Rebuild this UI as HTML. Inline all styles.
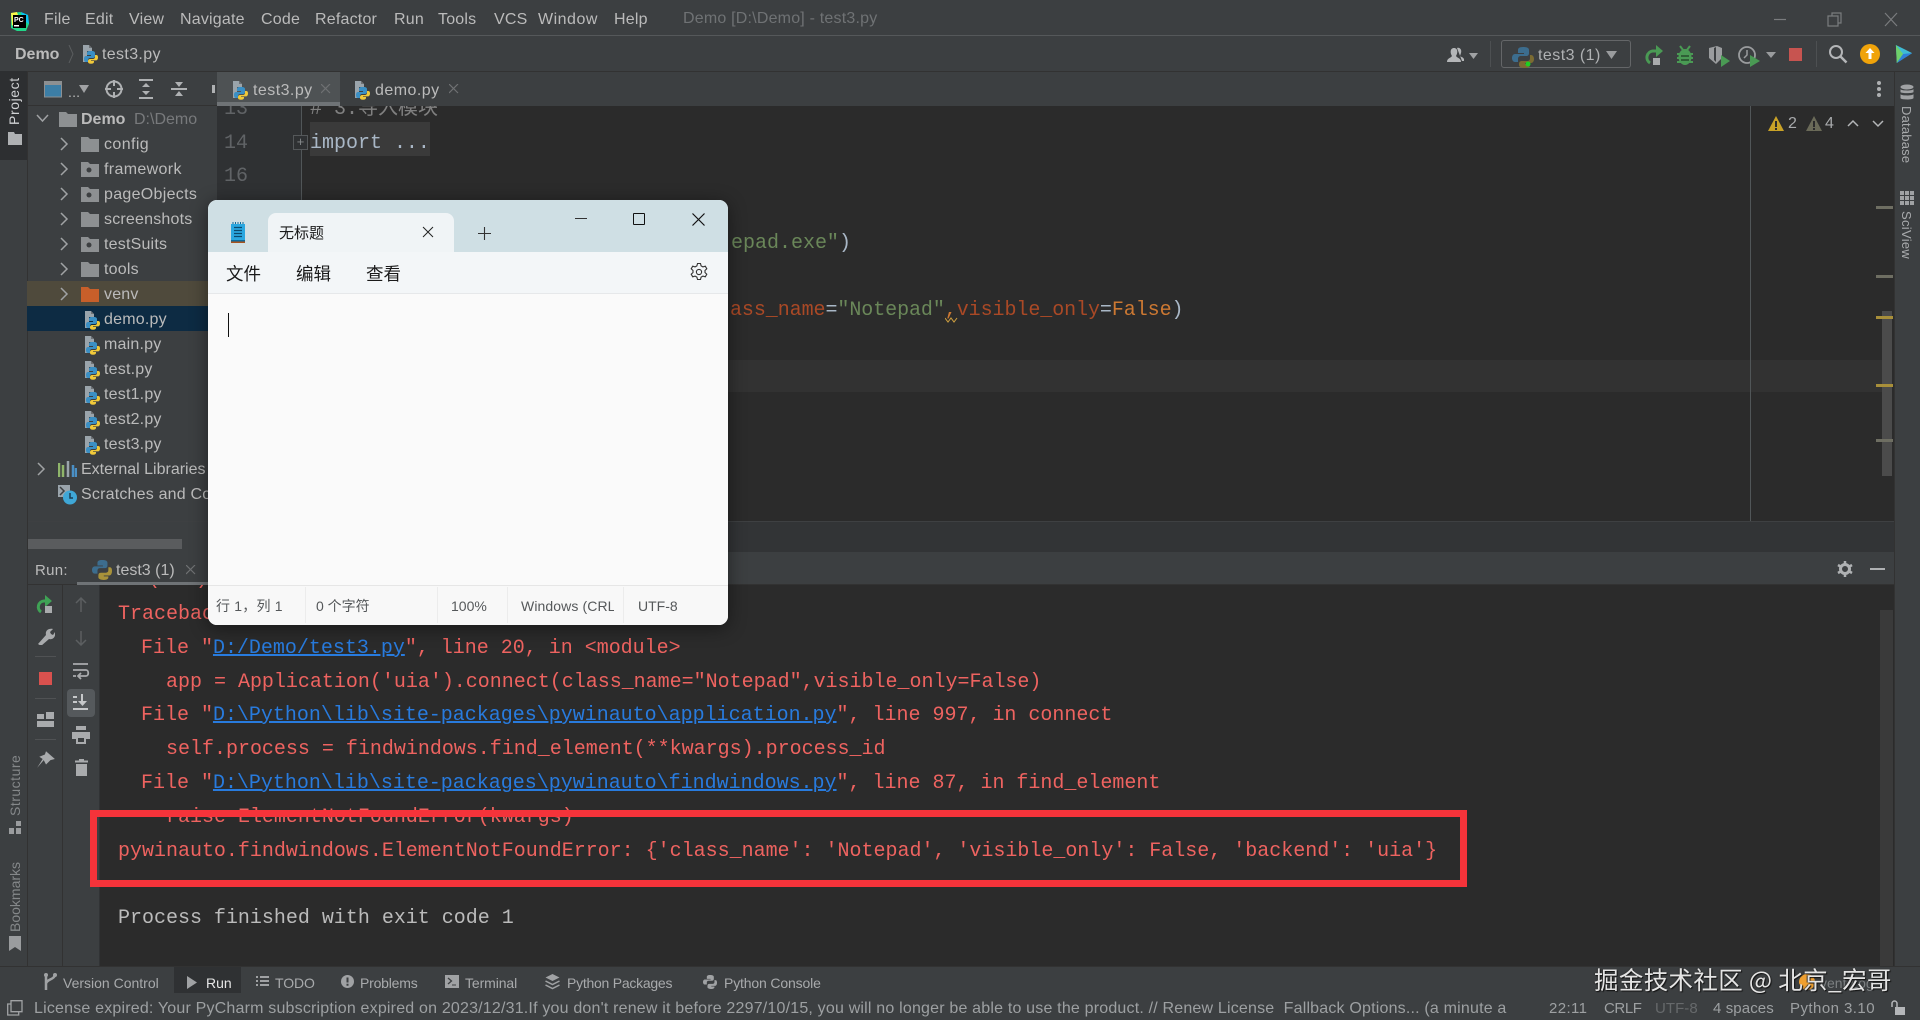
<!DOCTYPE html>
<html><head><meta charset="utf-8"><title>Demo - test3.py</title>
<style>
html,body{margin:0;padding:0;background:#2b2b2b;width:1920px;height:1020px;overflow:hidden}
#r{position:relative;width:1920px;height:1020px;overflow:hidden;background:#2b2b2b;font-family:"Liberation Sans","Noto Sans CJK SC",sans-serif;color:#bbb}
#r div,#r svg{position:absolute}
.t{white-space:pre;height:24px;line-height:24px;font-size:16px;letter-spacing:.2px;color:#bbb;margin-top:1px}
.m{font-family:"Liberation Mono","Noto Sans CJK SC",monospace;font-size:20px;letter-spacing:-.01px;color:#ee6360;height:30px;line-height:30px;white-space:pre;margin-top:2px}
.m u{color:#287bde;text-decoration:underline}
.b{font-size:14px;color:#a8aaac;height:20px;line-height:20px;white-space:pre}
.s{font-size:15px;color:#9da0a2;height:20px;line-height:20px;white-space:pre;letter-spacing:.05px;margin-top:1px}
.n{font-size:14px;color:#55585a;height:20px;line-height:20px;white-space:pre;font-family:"Liberation Sans","Noto Sans CJK SC",sans-serif}
.v{writing-mode:vertical-rl;white-space:pre;font-size:13px;color:#a8aaac;letter-spacing:.3px}
.vu{transform:rotate(180deg)}
</style></head><body>
<div id="r">
<svg width="0" height="0" style="left:0;top:0"><defs>
<symbol id="py" viewBox="0 0 18 20"><path d="M2 1h6l3 3v3H6v11H2z" fill="#9aa4ab"/><path d="M8 1v3h3z" fill="#6e7276"/><path d="M9 7c-2.500 0-3 1-3 2v2h4v1H5c-1.500 0-2 1.500-2 3s.5 3 2 3h2v-2c0-1 .7-2 2-2h3c1 0 2-.8 2-2V9c0-1-1-2-3-2z" fill="#3a8fc4"/><path d="M14 11v2c0 1.200-1 2-2 2H9c-1 0-2 .8-2 2v1c0 1 1 1.700 3 1.700s3-.7 3-1.700v-1H10v-.6h5c1.300 0 2-1.200 2-3s-.7-2.400-2-2.400z" fill="#f0c93a"/></symbol>
<symbol id="fd" viewBox="0 0 18 18"><path d="M0 2h7l2 2h9v13H0z" fill="#8d9092"/></symbol>
<symbol id="fp" viewBox="0 0 18 18"><path d="M0 2h7l2 2h9v13H0z" fill="#8d9092"/><circle cx="8" cy="10" r="2.500" fill="#3c3f41"/></symbol>
<symbol id="ch" viewBox="0 0 10 14"><path d="M2 1l6 6-6 6" fill="none" stroke="#a0a2a4" stroke-width="1.500"/></symbol>
</defs></svg>

<!-- title bar -->
<div style="left:0;top:0;width:1920px;height:35px;background:#3c3f41"></div>
<div style="left:0;top:35px;width:1920px;height:1px;background:#55585a"></div>
<svg style="left:9px;top:11px" width="21" height="21" viewBox="0 0 21 21"><path d="M2 2l9-1 8 3 1 9-3 7-9 0-6-3z" fill="#21d789"/><path d="M2 2l6-1 2 6-7 8z" fill="#fcf84a"/><path d="M12 1l7 3 1 9-6-4z" fill="#07c3f2"/><rect x="4" y="4" width="13" height="13" fill="#000"/><text x="5" y="11" font-size="7" font-family="Liberation Sans" font-weight="bold" fill="#fff">PC</text><rect x="5" y="14" width="5" height="1.500" fill="#fff"/></svg>
<div class="t" style="left:44px;top:7px">File</div>
<div class="t" style="left:85px;top:7px">Edit</div>
<div class="t" style="left:129px;top:7px">View</div>
<div class="t" style="left:180px;top:7px">Navigate</div>
<div class="t" style="left:261px;top:7px">Code</div>
<div class="t" style="left:315px;top:7px">Refactor</div>
<div class="t" style="left:394px;top:7px">Run</div>
<div class="t" style="left:438px;top:7px">Tools</div>
<div class="t" style="left:494px;top:7px">VCS</div>
<div class="t" style="left:538px;top:7px;letter-spacing:.5px">Window</div>
<div class="t" style="left:614px;top:7px">Help</div>
<div class="t" style="left:683px;top:6px;color:#6f7274;font-size:16px;letter-spacing:.2px">Demo [D:\Demo] - test3.py</div>
<svg style="left:1760px;top:10px" width="150" height="18" viewBox="0 0 150 18" fill="none" stroke="#7a7c7e" stroke-width="1.200"><path d="M14 9.500h12"/><path d="M72 6.500v-2.500h9v10h-3M72 7h-4v10h10v-10z" transform="translate(0,-1)"/><path d="M125 3l12 13M137 3l-12 13"/></svg>

<!-- nav bar -->
<div style="left:0;top:36px;width:1920px;height:35px;background:#3c3f41"></div>
<div style="left:0;top:71px;width:1920px;height:1px;background:#323232"></div>
<div class="t" style="left:15px;top:42px;font-weight:bold;font-size:16px;letter-spacing:0">Demo</div>
<svg style="left:68px;top:45px" width="6" height="18" viewBox="0 0 6 18"><path d="M1 0l4 9-4 9" stroke="#5a5d5f" fill="none"/></svg>
<svg style="left:81px;top:44px" width="18" height="20"><use href="#py"/></svg>
<div class="t" style="left:102px;top:42px;letter-spacing:.35px">test3.py</div>
<svg style="left:1445px;top:46px" width="36" height="18" viewBox="0 0 36 18"><path d="M2 16c0-4 4-4 5-6-2-3-2-8 2-8s4 5 2 8c1 2 5 2 5 6z" fill="#b4b6b8"/><path d="M12 2c3-1 5 2 4 5l-1 3c1 1 3 1 4 3v2h-2" fill="#b4b6b8"/><path d="M24 7h9l-4.500 6z" fill="#a0a2a4"/></svg>
<div style="left:1490px;top:41px;width:1px;height:26px;background:#4d5052"></div>
<div style="left:1501px;top:40px;width:128px;height:26px;border:1px solid #646668;border-radius:3px"></div>
<svg style="left:1512px;top:44px" width="22" height="24" viewBox="0 0 22 24"><path d="M11 3c-4 0-5 1.500-5 3v3h6v1H3c-2 0-3 2-3 4s1 4 3 4h3v-3c0-2 1-3 3-3h5c2 0 3-1 3-3V6c0-2-2-3-6-3z" fill="#3c6d8e"/><path d="M18 11v3c0 2-1 3-3 3H10c-2 0-3 1-3 3v1c0 2 3 3 6 3s5-1 5-3v-1h-5v-1h6c2 0 3-2 3-4s-1-4-3-4z" fill="#7b6b32"/><circle cx="16" cy="20" r="2.500" fill="#1ed021"/></svg>
<div class="t" style="left:1538px;top:43px;letter-spacing:.45px;color:#afb1b3">test3 (1)</div>
<svg style="left:1606px;top:50px" width="12" height="10"><path d="M0 1h11L5.500 9z" fill="#9a9c9e"/></svg>
<svg style="left:1643px;top:44px" width="22" height="24" viewBox="0 0 22 24"><path d="M16 7H10a6.500 6.500 0 0 0-3 12" fill="none" stroke="#4a9a54" stroke-width="3"/><path d="M13 1l7 6-7 6z" fill="#4a9a54"/><rect x="10" y="14" width="7" height="7" fill="#a9abad"/></svg>
<svg style="left:1675px;top:44px" width="20" height="24" viewBox="0 0 20 24"><ellipse cx="10" cy="13" rx="6.500" ry="8" fill="#4a9a54"/><path d="M2 10h16M2 14h16M2 18h16M5 2l3 4M15 2l-3 4" stroke="#4a9a54" stroke-width="2"/><path d="M6 12h8M6 16h8" stroke="#2f5f36" stroke-width="2"/></svg>
<svg style="left:1707px;top:44px" width="24" height="24" viewBox="0 0 24 24"><path d="M2 4l8-2 5 2v10l-6 6-7-6z" fill="#9a9c9e"/><path d="M9 3l-2 1v12l2 2z" fill="#3c3f41"/><path d="M14 11l9 6-9 6z" fill="#4a9a54"/></svg>
<svg style="left:1737px;top:44px" width="24" height="24" viewBox="0 0 24 24"><circle cx="10" cy="11" r="8" fill="none" stroke="#9a9c9e" stroke-width="1.800"/><path d="M10 6v5l-3 3" stroke="#9a9c9e" stroke-width="1.500" fill="none"/><path d="M13 11l10 6-10 6z" fill="#4a9a54"/></svg>
<svg style="left:1766px;top:52px" width="11" height="8"><path d="M0 0h10L5 6z" fill="#9a9c9e"/></svg>
<div style="left:1789px;top:48px;width:13px;height:13px;background:#c75450"></div>
<div style="left:1816px;top:41px;width:1px;height:26px;background:#4d5052"></div>
<svg style="left:1828px;top:44px" width="20" height="20" viewBox="0 0 20 20" fill="none" stroke="#b4b6b8" stroke-width="2"><circle cx="8" cy="8" r="6"/><path d="M12.500 12.500l6 6" stroke-width="2.500"/></svg>
<svg style="left:1860px;top:44px" width="20" height="20" viewBox="0 0 20 20"><circle cx="10" cy="10" r="10" fill="#f0a30a"/><path d="M10 4l4.500 5H11.500v6h-3V9H5.500z" fill="#fff"/></svg>
<svg style="left:1895px;top:43px" width="18" height="22" viewBox="0 0 20 22"><path d="M1 1l18 9-17 11z" fill="#3fbbd4"/><path d="M1 1l8 10L2 21z" fill="#6fd06a"/><path d="M9 11l10-1-17 11z" fill="#2f7fd8"/></svg>

<!-- left strip -->
<div style="left:0;top:72px;width:27px;height:894px;background:#3c3f41"></div>
<div style="left:0;top:71px;width:27px;height:89px;background:#2d2f31"></div>
<div class="v vu" style="left:7px;top:79px;height:46px;color:#d0d2d4;line-height:15px;font-size:14px;letter-spacing:.6px">Project</div>
<svg style="left:8px;top:132px" width="14" height="13"><path d="M0 0h6l1 2h7v11H0z" fill="#afb1b3"/></svg>
<div style="left:27px;top:72px;width:1px;height:894px;background:#323232"></div>
<div class="v vu" style="left:8px;top:750px;height:66px;line-height:15px;color:#85888a;font-size:14px;letter-spacing:.5px">Structure</div>
<svg style="left:9px;top:821px" width="14" height="14"><path d="M0 7h5v6H0zM7 0h5v5H7zM7 7h5v6H7z" fill="#9a9c9e"/></svg>
<div class="v vu" style="left:8px;top:860px;height:72px;line-height:15px;color:#85888a;font-size:14px;letter-spacing:0">Bookmarks</div>
<svg style="left:9px;top:936px" width="13" height="16"><path d="M0 0h12v15l-6-4-6 4z" fill="#9a9c9e"/></svg>

<!-- project panel -->
<div style="left:28px;top:72px;width:189px;height:480px;background:#3c3f41"></div>
<div style="left:28px;top:105px;width:189px;height:1px;background:#323232"></div>
<svg style="left:44px;top:81px" width="19" height="17"><rect x="0.500" y="0.500" width="17" height="15.500" fill="#3c7ea6" stroke="#8d9092"/><path d="M1 1h16v3H1z" fill="#8d9092"/></svg>
<div class="t" style="left:68px;top:79px;font-size:14px">...</div>
<svg style="left:79px;top:85px" width="11" height="10"><path d="M0 0h10L5 8z" fill="#a0a2a4"/></svg>
<svg style="left:104px;top:79px" width="20" height="20" viewBox="0 0 20 20" fill="none" stroke="#afb1b3" stroke-width="2"><circle cx="10" cy="10" r="7.500"/><path d="M10 1v6M10 13v6M1 10h6M13 10h6"/></svg>
<svg style="left:138px;top:79px" width="16" height="20" viewBox="0 0 16 20"><path d="M1 1h14M1 19h14" stroke="#afb1b3" stroke-width="2"/><path d="M8 4l4 4H4zM8 16l4-4H4z" fill="#afb1b3"/></svg>
<svg style="left:171px;top:79px" width="16" height="20" viewBox="0 0 16 20"><path d="M0 10h16" stroke="#afb1b3" stroke-width="2"/><path d="M8 8l4-5H4zM8 12l4 5H4z" fill="#afb1b3"/></svg>
<div style="left:212px;top:85px;width:3px;height:8px;background:#afb1b3"></div>

<div style="left:27px;top:281px;width:190px;height:25px;background:#4f4a3c"></div>
<div style="left:27px;top:306px;width:190px;height:25px;background:#0d2b43"></div>

<svg style="left:36px;top:113px" width="13" height="12" viewBox="0 0 13 12"><path d="M1 2l5.500 6L12 2" fill="none" stroke="#a0a2a4" stroke-width="1.500"/></svg>
<svg style="left:59px;top:110px" width="18" height="18"><use href="#fd"/></svg>
<div class="t" style="left:81px;top:107px;font-weight:bold;font-size:16px;letter-spacing:0">Demo</div>
<div class="t" style="left:134px;top:107px;color:#787a7c;font-size:16px;letter-spacing:0">D:\Demo</div>

<svg style="left:59px;top:137px" width="10" height="14"><use href="#ch"/></svg><svg style="left:81px;top:135px" width="18" height="18"><use href="#fd"/></svg><div class="t" style="left:104px;top:132px;letter-spacing:.4px">config</div>
<svg style="left:59px;top:162px" width="10" height="14"><use href="#ch"/></svg><svg style="left:81px;top:160px" width="18" height="18"><use href="#fp"/></svg><div class="t" style="left:104px;top:157px;letter-spacing:.35px">framework</div>
<svg style="left:59px;top:187px" width="10" height="14"><use href="#ch"/></svg><svg style="left:81px;top:185px" width="18" height="18"><use href="#fp"/></svg><div class="t" style="left:104px;top:182px;letter-spacing:.3px">pageObjects</div>
<svg style="left:59px;top:212px" width="10" height="14"><use href="#ch"/></svg><svg style="left:81px;top:210px" width="18" height="18"><use href="#fd"/></svg><div class="t" style="left:104px;top:207px">screenshots</div>
<svg style="left:59px;top:237px" width="10" height="14"><use href="#ch"/></svg><svg style="left:81px;top:235px" width="18" height="18"><use href="#fp"/></svg><div class="t" style="left:104px;top:232px">testSuits</div>
<svg style="left:59px;top:262px" width="10" height="14"><use href="#ch"/></svg><svg style="left:81px;top:260px" width="18" height="18"><use href="#fd"/></svg><div class="t" style="left:104px;top:257px">tools</div>
<svg style="left:59px;top:287px" width="10" height="14"><use href="#ch"/></svg><svg style="left:81px;top:285px" width="18" height="18" viewBox="0 0 18 18"><path d="M0 2h7l2 2h9v13H0z" fill="#c75f2a"/></svg><div class="t" style="left:104px;top:282px">venv</div>
<svg style="left:83px;top:310px" width="18" height="20"><use href="#py"/></svg><div class="t" style="left:104px;top:307px">demo.py</div>
<svg style="left:83px;top:335px" width="18" height="20"><use href="#py"/></svg><div class="t" style="left:104px;top:332px">main.py</div>
<svg style="left:83px;top:360px" width="18" height="20"><use href="#py"/></svg><div class="t" style="left:104px;top:357px">test.py</div>
<svg style="left:83px;top:385px" width="18" height="20"><use href="#py"/></svg><div class="t" style="left:104px;top:382px">test1.py</div>
<svg style="left:83px;top:410px" width="18" height="20"><use href="#py"/></svg><div class="t" style="left:104px;top:407px">test2.py</div>
<svg style="left:83px;top:435px" width="18" height="20"><use href="#py"/></svg><div class="t" style="left:104px;top:432px">test3.py</div>
<svg style="left:36px;top:462px" width="10" height="14"><use href="#ch"/></svg>
<svg style="left:58px;top:460px" width="19" height="18" viewBox="0 0 19 18"><path d="M1 3v14M5 5v12" stroke="#8fb56a" stroke-width="2.500"/><path d="M10 1v16" stroke="#9aa4ab" stroke-width="2.500"/><path d="M15 5v12M18 8v9" stroke="#4a8fc4" stroke-width="2.500"/></svg>
<div class="t" style="left:81px;top:457px;letter-spacing:0">External Libraries</div>
<svg style="left:58px;top:484px" width="20" height="21" viewBox="0 0 20 21"><rect x="0" y="1" width="12" height="12" fill="#9aa4ab"/><path d="M2 3l4 4-4 4" stroke="#3c3f41" fill="none" stroke-width="1.500"/><circle cx="12" cy="13.500" r="7" fill="#3fa7d6"/><path d="M12 9v5h3" stroke="#1d3c50" fill="none" stroke-width="1.500"/></svg>
<div class="t" style="left:81px;top:482px">Scratches and Consoles</div>
<div style="left:28px;top:539px;width:154px;height:10px;background:#5a5c5e"></div>

<!-- tabs -->
<div style="left:217px;top:72px;width:1677px;height:34px;background:#3c3f41"></div>
<div style="left:217px;top:72px;width:123px;height:30px;background:#4e5254"></div>
<div style="left:217px;top:102px;width:123px;height:4px;background:#6f7376"></div>
<svg style="left:231px;top:80px" width="18" height="20"><use href="#py"/></svg>
<div class="t" style="left:253px;top:78px;letter-spacing:.45px">test3.py</div>
<svg style="left:321px;top:84px" width="10" height="10"><path d="M0 0l9 9M9 0l-9 9" stroke="#6f7173" stroke-width="1.200"/></svg>
<svg style="left:353px;top:80px" width="18" height="20"><use href="#py"/></svg>
<div class="t" style="left:375px;top:78px;letter-spacing:.45px">demo.py</div>
<svg style="left:449px;top:84px" width="10" height="10"><path d="M0 0l9 9M9 0l-9 9" stroke="#6f7173" stroke-width="1.200"/></svg>
<svg style="left:1876px;top:80px" width="6" height="18"><circle cx="3" cy="3" r="2" fill="#afb1b3"/><circle cx="3" cy="9" r="2" fill="#afb1b3"/><circle cx="3" cy="15" r="2" fill="#afb1b3"/></svg>

<!-- editor -->
<div style="left:217px;top:106px;width:84px;height:415px;background:#2f3133"></div>
<div style="left:301px;top:106px;width:1px;height:415px;background:#515658"></div>
<div style="left:302px;top:106px;width:1592px;height:415px;background:#2b2b2b"></div>
<div style="left:302px;top:360px;width:1590px;height:32px;background:#323232"></div>
<div style="left:1750px;top:106px;width:1px;height:415px;background:#515658"></div>
<div style="left:217px;top:106px;width:1677px;height:18px;overflow:hidden">
 <div class="m" style="left:7px;top:-13px;color:#606366">13</div>
 <div class="m" style="left:93px;top:-13px;color:#808080">#&#160;3.导入模块</div>
</div>
<div class="m" style="left:224px;top:127px;color:#606366">14</div>
<div class="m" style="left:224px;top:160px;color:#606366">16</div>
<div style="left:293px;top:135px;width:13px;height:13px;border:1px solid #55585a;background:#2f3133;color:#85888a;font-size:13px;line-height:12px;text-align:center">+</div>
<div style="left:310px;top:122px;width:120px;height:34px;background:#3a3a3a"></div>
<div class="m" style="left:310px;top:127px;color:#a9b7c6">import ...</div>
<div class="m" style="left:731px;top:227px;color:#6a8759">epad.exe"<span style="color:#a9b7c6">)</span></div>
<div class="m" style="left:730px;top:294px;color:#aa4926;letter-spacing:-.07px">ass_name<span style="color:#a9b7c6">=</span><span style="color:#6a8759">"Notepad"</span><span style="color:#cc7832">,</span>visible_only<span style="color:#a9b7c6">=</span><span style="color:#cc7832">False</span><span style="color:#a9b7c6">)</span></div>
<svg style="left:945px;top:316px" width="13" height="7"><path d="M0 2l3 4 3-4 3 4 3-4" fill="none" stroke="#d0a040"/></svg>
<svg style="left:1768px;top:116px" width="16" height="15"><path d="M8 0l8 15H0z" fill="#c9a227"/><path d="M7 5h2v6H7zM7 12h2v2H7z" fill="#2b2b2b"/></svg>
<div class="t" style="left:1788px;top:111px;letter-spacing:0;color:#a8aaac">2</div>
<svg style="left:1806px;top:116px" width="16" height="15"><path d="M8 0l8 15H0z" fill="#6a6a58"/><path d="M7 5h2v6H7zM7 12h2v2H7z" fill="#2b2b2b"/></svg>
<div class="t" style="left:1825px;top:111px;letter-spacing:0;color:#a8aaac">4</div>
<svg style="left:1847px;top:119px" width="38" height="9" viewBox="0 0 38 9" fill="none" stroke="#b4b6b8" stroke-width="1.500"><path d="M1 7l5-5 5 5M26 2l5 5 5-5"/></svg>
<div style="left:1882px;top:311px;width:10px;height:165px;background:#4b4b4b"></div>
<div style="left:1876px;top:206px;width:17px;height:3px;background:#6e6e62"></div>
<div style="left:1876px;top:275px;width:17px;height:3px;background:#6e6e62"></div>
<div style="left:1876px;top:316px;width:17px;height:3px;background:#a88f3a"></div>
<div style="left:1876px;top:384px;width:17px;height:3px;background:#a88f3a"></div>
<div style="left:1876px;top:439px;width:17px;height:3px;background:#6e6e62"></div>

<!-- right strip -->
<div style="left:1894px;top:72px;width:26px;height:894px;background:#3c3f41"></div>
<div style="left:1894px;top:72px;width:1px;height:894px;background:#323232"></div>
<svg style="left:1900px;top:84px" width="14" height="17" viewBox="0 0 14 17"><ellipse cx="7" cy="3" rx="6.500" ry="2.500" fill="#a0a2a4"/><path d="M.5 5v3c0 1.500 13 1.500 13 0V5c0 2-13 2-13 0zM.5 10v4c0 2 13 2 13 0v-4c0 2-13 2-13 0z" fill="#a0a2a4"/></svg>
<div class="v" style="left:1899px;top:106px;line-height:15px;letter-spacing:.2px;height:60px">Database</div>
<svg style="left:1900px;top:191px" width="14" height="14"><path d="M0 0h14v14H0z" fill="#a0a2a4"/><path d="M0 4.500h14M0 9.500h14M4.500 0v14M9.500 0v14" stroke="#3c3f41"/></svg>
<div class="v" style="left:1899px;top:211px;line-height:15px;height:50px">SciView</div>

<!-- editor bottom strip & run header -->
<div style="left:28px;top:521px;width:1866px;height:1px;background:#3e4042"></div>
<div style="left:217px;top:522px;width:1677px;height:30px;background:#323436"></div>
<div style="left:28px;top:552px;width:1866px;height:33px;background:#3c3f41"></div>
<div style="left:28px;top:584px;width:1866px;height:1px;background:#323232"></div>
<div style="left:28px;top:549px;width:189px;height:3px;background:#3c3f41"></div>
<div class="t" style="left:35px;top:558px;font-size:15px;letter-spacing:.3px">Run:</div>
<svg style="left:92px;top:559px" width="20" height="22" viewBox="0 0 22 24"><path d="M11 1c-4 0-5 1.500-5 3v3h6v1H3c-2 0-3 2-3 4s1 4 3 4h3v-3c0-2 1-3 3-3h5c2 0 3-1 3-3V4c0-2-2-3-6-3z" fill="#3c6d8e"/><path d="M18 9v3c0 2-1 3-3 3H10c-2 0-3 1-3 3v2c0 2 3 3 6 3s5-1 5-3v-1h-5v-1h6c2 0 3-2 3-5s-1-4-3-4z" fill="#a8923a"/></svg>
<div class="t" style="left:116px;top:558px;font-size:16px;letter-spacing:0">test3 (1)</div>
<svg style="left:186px;top:565px" width="10" height="10"><path d="M0 0l9 9M9 0l-9 9" stroke="#6f7173" stroke-width="1.200"/></svg>
<div style="left:77px;top:582px;width:131px;height:4px;background:#6f7376"></div>
<svg style="left:1837px;top:561px" width="16" height="16" viewBox="0 0 16 16"><circle cx="8" cy="8" r="4.500" fill="none" stroke="#afb1b3" stroke-width="3"/><path d="M8 0v3M8 13v3M1 4l2.500 1.500M12.500 10.500L15 12M1 12l2.500-1.500M12.500 5.500L15 4" stroke="#afb1b3" stroke-width="2.500"/></svg>
<div style="left:1870px;top:568px;width:15px;height:2px;background:#afb1b3"></div>

<!-- run sidebar -->
<div style="left:28px;top:585px;width:72px;height:381px;background:#3c3f41"></div>
<div style="left:62px;top:585px;width:1px;height:381px;background:#323232"></div>
<div style="left:99px;top:585px;width:1px;height:381px;background:#313335"></div>
<svg style="left:36px;top:595px" width="18" height="20" viewBox="0 0 18 20"><path d="M11 6H8a6 6 0 0 0-3 11" fill="none" stroke="#3fa255" stroke-width="3"/><path d="M9 0l7 6-7 6z" fill="#3fa255"/><rect x="9" y="11" width="7" height="7" fill="#a9abad"/></svg>
<svg style="left:37px;top:627px" width="18" height="18" viewBox="0 0 18 18"><path d="M1 17l8-9c-1-4 2-7 7-6l-3 3 1 2 2 1 2-3c1 5-2 8-6 7l-8 7z" fill="#a9abad"/></svg>
<div style="left:35px;top:656px;width:21px;height:1px;background:#505254"></div>
<div style="left:39px;top:672px;width:13px;height:13px;background:#d9514e"></div>
<div style="left:35px;top:698px;width:21px;height:1px;background:#505254"></div>
<svg style="left:37px;top:712px" width="17" height="15"><path d="M0 2h7v5H0zM9 0h8v7H9zM0 9h17v6H0z" fill="#a9abad"/></svg>
<div style="left:35px;top:739px;width:21px;height:1px;background:#505254"></div>
<svg style="left:36px;top:749px" width="20" height="20" viewBox="0 0 18 18"><path d="M9 2l8 7-4 1-4 4-2-4-6 7 5-8-3-2 5-2z" fill="#a9abad"/></svg>
<svg style="left:75px;top:597px" width="12" height="16" viewBox="0 0 12 16"><path d="M6 1v14M1 6l5-5 5 5" fill="none" stroke="#5c5f61" stroke-width="1.500"/></svg>
<svg style="left:75px;top:630px" width="12" height="16" viewBox="0 0 12 16"><path d="M6 1v14M1 10l5 5 5-5" fill="none" stroke="#5c5f61" stroke-width="1.500"/></svg>
<svg style="left:72px;top:662px" width="18" height="18" viewBox="0 0 18 18"><path d="M1 2h15M1 8h13c3 0 3 6 0 6H7M9 11l-3 3 3 3M1 14h3" fill="none" stroke="#a9abad" stroke-width="1.800"/></svg>
<div style="left:67px;top:689px;width:28px;height:28px;background:#55595c;border-radius:4px"></div>
<svg style="left:72px;top:693px" width="18" height="18" viewBox="0 0 18 18"><path d="M1 4h4M1 9h4M1 16h15" stroke="#c6c8ca" stroke-width="2"/><path d="M10 1v9" stroke="#c6c8ca" stroke-width="2"/><path d="M6 8h9l-4.500 5z" fill="#c6c8ca"/></svg>
<svg style="left:72px;top:726px" width="18" height="18" viewBox="0 0 18 18"><path d="M4 0h10v4H4zM0 6h18v7H0zM4 10h10v8H4z" fill="#a9abad"/><rect x="6" y="12" width="6" height="4" fill="#3c3f41"/></svg>
<svg style="left:75px;top:759px" width="13" height="17" viewBox="0 0 13 17"><path d="M4 0h5v1.500h4v2H0v-2h4zM1 5h11v12H1z" fill="#a9abad"/></svg>

<!-- console -->
<div style="left:100px;top:585px;width:1794px;height:381px;background:#2b2b2b"></div>
<div style="left:1880px;top:610px;width:13px;height:356px;background:#3a3a3a"></div>
<div class="m" style="left:148px;top:563px;clip-path:inset(20px 0 0 0)">(...)</div>
<div class="m" style="left:118px;top:598px">Traceback (most recent call last):</div>
<div class="m" style="left:141px;top:632px">File "<u>D:/Demo/test3.py</u>", line 20, in &lt;module&gt;</div>
<div class="m" style="left:166px;top:666px">app = Application('uia').connect(class_name="Notepad",visible_only=False)</div>
<div class="m" style="left:141px;top:699px">File "<u>D:\Python\lib\site-packages\pywinauto\application.py</u>", line 997, in connect</div>
<div class="m" style="left:166px;top:733px">self.process = findwindows.find_element(**kwargs).process_id</div>
<div class="m" style="left:141px;top:767px">File "<u>D:\Python\lib\site-packages\pywinauto\findwindows.py</u>", line 87, in find_element</div>
<div class="m" style="left:166px;top:801px">raise ElementNotFoundError(kwargs)</div>
<div class="m" style="left:118px;top:835px">pywinauto.findwindows.ElementNotFoundError: {'class_name': 'Notepad', 'visible_only': False, 'backend': 'uia'}</div>
<div class="m" style="left:118px;top:902px;color:#bbb">Process finished with exit code 1</div>
<div style="left:90px;top:810px;width:1363px;height:63px;border:7px solid #f5333a"></div>

<!-- bottom bars -->
<div style="left:0;top:966px;width:1920px;height:54px;background:#3c3f41"></div>
<div style="left:0;top:966px;width:1920px;height:1px;background:#323232"></div>
<div style="left:174px;top:967px;width:67px;height:26px;background:#2f3133"></div>
<svg style="left:44px;top:972px" width="13" height="20" viewBox="0 0 13 20"><path d="M2 2v16M11 2c0 6-9 5-9 10" fill="none" stroke="#a0a2a4" stroke-width="2.500"/><circle cx="2" cy="3" r="2" fill="#a0a2a4"/><circle cx="11" cy="3" r="2" fill="#a0a2a4"/></svg>
<div class="b" style="left:63px;top:973px">Version Control</div>
<svg style="left:187px;top:975px" width="11" height="15"><path d="M0 1l10 6.500L0 14z" fill="#a0a2a4"/></svg>
<div class="b" style="left:206px;top:973px;color:#e6e6e6">Run</div>
<svg style="left:256px;top:975px" width="13" height="13"><path d="M0 1h2v2H0zM4 1h9v2H4zM0 5h2v2H0zM4 5h9v2H4zM0 9h2v2H0zM4 9h9v2H4z" fill="#a0a2a4"/></svg>
<div class="b" style="left:275px;top:973px;letter-spacing:-.1px">TODO</div>
<svg style="left:341px;top:975px" width="13" height="13"><circle cx="6.500" cy="6.500" r="6.500" fill="#a0a2a4"/><path d="M5.500 2.500h2v5h-2zM5.500 8.800h2v2h-2z" fill="#3c3f41"/></svg>
<div class="b" style="left:360px;top:973px;letter-spacing:-.2px">Problems</div>
<svg style="left:445px;top:975px" width="14" height="13"><rect width="14" height="13" fill="#a0a2a4"/><path d="M3 3l3.500 3L3 9" stroke="#3c3f41" fill="none" stroke-width="1.300"/><path d="M7 10h4" stroke="#3c3f41"/></svg>
<div class="b" style="left:465px;top:973px;letter-spacing:-.1px">Terminal</div>
<svg style="left:545px;top:974px" width="15" height="16" viewBox="0 0 15 16"><path d="M7.500 0l7 3.500-7 3.500-7-3.500z" fill="#a0a2a4"/><path d="M.5 7l7 3.500 7-3.500M.5 11l7 3.500 7-3.500" fill="none" stroke="#a0a2a4" stroke-width="1.500"/></svg>
<div class="b" style="left:567px;top:973px;letter-spacing:-.25px">Python Packages</div>
<svg style="left:703px;top:974px" width="14" height="16" viewBox="0 0 22 24"><path d="M11 1c-4 0-5 1.500-5 3v3h6v1H3c-2 0-3 2-3 4s1 4 3 4h3v-3c0-2 1-3 3-3h5c2 0 3-1 3-3V4c0-2-2-3-6-3z" fill="#a0a2a4"/><path d="M18 9v3c0 2-1 3-3 3H10c-2 0-3 1-3 3v2c0 2 3 3 6 3s5-1 5-3v-1h-5v-1h6c2 0 3-2 3-5s-1-4-3-4z" fill="#a0a2a4"/></svg>
<div class="b" style="left:724px;top:973px;letter-spacing:-.15px">Python Console</div>

<svg style="left:7px;top:1000px" width="16" height="16" fill="none" stroke="#a0a2a4" stroke-width="1.300"><path d="M4 .7h11v11H4zM4 4H.7v11h11v-3"/></svg>
<div class="s" style="left:34px;top:998px;font-size:16px;letter-spacing:.19px">License expired: Your PyCharm subscription expired on 2023/12/31.If you don't renew it before 2297/10/15, you will no longer be able to use the product. // Renew License  Fallback Options... (a minute a</div>
<div class="s" style="left:1549px;top:998px;letter-spacing:.4px">22:11</div>
<div class="s" style="left:1604px;top:998px;letter-spacing:-.4px">CRLF</div>
<div class="s" style="left:1655px;top:998px;color:#66696b">UTF-8</div>
<div class="s" style="left:1713px;top:998px;letter-spacing:.1px">4 spaces</div>
<div class="s" style="left:1790px;top:998px;letter-spacing:.45px">Python 3.10</div>
<svg style="left:1890px;top:1000px" width="15" height="15" viewBox="0 0 15 15"><path d="M2 7V3.500a2.500 2.500 0 0 1 5 0V7" fill="none" stroke="#b4b6b8" stroke-width="1.500"/><rect x="5" y="7" width="10" height="8" fill="#b4b6b8"/></svg>

<!-- watermark -->
<svg style="left:1799px;top:974px" width="16" height="16"><circle cx="8" cy="8" r="8" fill="#f0a030"/></svg>
<div class="b" style="left:1820px;top:973px;font-size:14px;color:#7d8082">vent Log</div>
<div style="left:1594px;top:964px;height:32px;line-height:32px;font-size:24.500px;letter-spacing:.35px;color:#e4e4e4;white-space:pre;text-shadow:1px 1px 1px #111,-1px 0 1px #333;font-family:'Noto Sans CJK SC','Liberation Sans',sans-serif">掘金技术社区 @ 北京_宏哥</div>

<!-- Notepad window -->
<div style="left:208px;top:200px;width:520px;height:425px;border-radius:9px;overflow:hidden;background:#fafafa;box-shadow:0 3px 18px rgba(0,0,0,.45)">
 <div style="left:0;top:0;width:520px;height:52px;background:#cfdfe4"></div>
 <div style="left:60px;top:13px;width:186px;height:39px;background:#f0f4f6;border-radius:8px 8px 0 0"></div>
 <div style="left:0;top:52px;width:520px;height:41px;background:#f3f6f8"></div>
 <div style="left:0;top:93px;width:520px;height:1px;background:#e6e8ea"></div>
 <div style="left:0;top:385px;width:520px;height:40px;background:#f8f8f8;border-top:1px solid #e6e6e6"></div>
</div>
<svg style="left:230px;top:221px" width="16" height="22" viewBox="0 0 16 22"><path d="M1 3h14v16H1z" fill="#2aa7e0"/><path d="M1 19h14v1.500H1z" fill="#0c6a9c"/><path d="M1 20.500h14V22H1z" fill="#a8531e"/><path d="M4 6.500h8M4 9.500h8M4 12.500h8M4 15.500h8" stroke="#0a4a6e" stroke-width="1.300"/><path d="M3 1v2M5.500 1v2M8 1v2M10.500 1v2M13 1v2" stroke="#0f6a9a" stroke-width="1"/></svg>
<div style="left:279px;top:222px;height:22px;line-height:22px;font-size:15px;color:#1a1a1a;white-space:pre;font-family:'Noto Sans CJK SC',sans-serif">无标题</div>
<svg style="left:422px;top:226px" width="12" height="12"><path d="M1 1l10 10M11 1L1 11" stroke="#222" stroke-width="1"/></svg>
<svg style="left:478px;top:227px" width="13" height="13"><path d="M6.500 0v13M0 6.500h13" stroke="#333" stroke-width="1.100"/></svg>
<div style="left:575px;top:218px;width:12px;height:1px;background:#333"></div>
<div style="left:633px;top:213px;width:10px;height:10px;border:1.200px solid #111;border-radius:1px"></div>
<svg style="left:692px;top:213px" width="13" height="13"><path d="M.5.5l12 12M12.500.5l-12 12" stroke="#111" stroke-width="1.200"/></svg>
<div style="left:226px;top:262px;height:24px;line-height:24px;font-size:17.500px;color:#1a1a1a;white-space:pre;font-family:'Noto Sans CJK SC',sans-serif">文件</div>
<div style="left:296px;top:262px;height:24px;line-height:24px;font-size:17.500px;color:#1a1a1a;white-space:pre;font-family:'Noto Sans CJK SC',sans-serif">编辑</div>
<div style="left:366px;top:262px;height:24px;line-height:24px;font-size:17.500px;color:#1a1a1a;white-space:pre;font-family:'Noto Sans CJK SC',sans-serif">查看</div>
<svg style="left:689px;top:262px" width="20" height="20" viewBox="0 0 20 20" fill="none" stroke="#333" stroke-width="1.100"><path d="M8.500 1.500h3l.6 2.400 1.800 1 2.400-.7 1.500 2.600-1.800 1.700v2l1.800 1.700-1.500 2.600-2.400-.7-1.800 1-.6 2.400h-3l-.6-2.400-1.800-1-2.400.7-1.500-2.600 1.800-1.700v-2L2.200 6.800l1.500-2.600 2.400.7 1.800-1z"/><circle cx="10" cy="10" r="2.600"/></svg>
<div style="left:228px;top:313px;width:1px;height:24px;background:#111"></div>
<div class="n" style="left:216px;top:596px;letter-spacing:.2px">行 1，列 1</div>
<div class="n" style="left:316px;top:596px">0 个字符</div>
<div class="n" style="left:451px;top:596px">100%</div>
<div class="n" style="left:521px;top:596px;width:93px;overflow:hidden;letter-spacing:.1px">Windows (CRLF)</div>
<div class="n" style="left:638px;top:596px">UTF-8</div>
<div style="left:305px;top:587px;width:1px;height:36px;background:#ececec"></div>
<div style="left:437px;top:587px;width:1px;height:36px;background:#ececec"></div>
<div style="left:507px;top:587px;width:1px;height:36px;background:#ececec"></div>
<div style="left:623px;top:587px;width:1px;height:36px;background:#ececec"></div>
</div>
</body></html>
